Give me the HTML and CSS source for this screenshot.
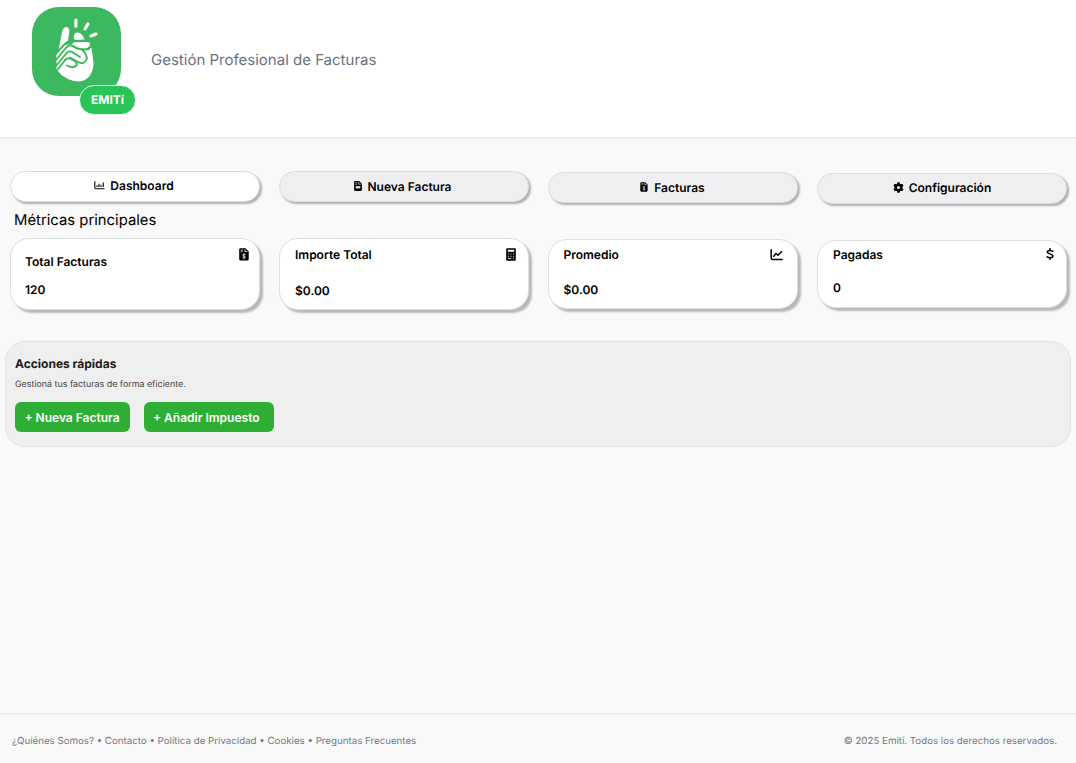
FILE: index.html
```html
<!DOCTYPE html>
<html lang="es">
<head>
<meta charset="utf-8">
<title>Emití</title>
<link rel="stylesheet" href="styles.css">
</head>
<body>
<svg class="defs" width="0" height="0">
  <symbol id="invoice" viewBox="0 0 10 13">
    <path fill="currentColor" d="M1.600.3h4.900l3.200 3v7.900c0 .8-.6 1.400-1.400 1.400H1.600c-.8 0-1.400-.6-1.400-1.400V1.700C.2.900.8.3 1.600.3z"/>
    <path stroke="#fff" stroke-width=".8" fill="none" d="M1.700 2.200h2.300M1.700 3.800h1.600M6 1.300v2.300h2.500M6.500 6.600C5.800 6 3.700 6 3.800 7.200c.1 1.100 2.600.8 2.600 2 0 1.200-2.100 1.100-2.900.5M5 5.400v5.800"/>
  </symbol>
  <symbol id="doc" viewBox="0 0 8 10">
    <path fill="currentColor" d="M1.200.1h4l2.700 2.600v6.100c0 .7-.5 1.100-1.100 1.100H1.200C.5 9.900.1 9.500.1 8.800V1.200C.1.500.5.100 1.200.100z"/>
    <path fill="none" stroke="#efeff1" stroke-width=".7" d="M1.300 1.800h1.800M1.300 3.300h1.800M4.700 1v2.200h2.200"/>
    <path fill="#efeff1" d="M1.700 5.200h4.600v2.200H1.700z"/>
  </symbol>
</svg>

<header class="header">
  <div class="logo">
    <svg class="logo-mark" viewBox="0 0 90 90">
      <g fill="#fff">
        <path d="M27 47 31 26C32.500 19 38.800 19.500 38.300 26L37 35 33 41z"/>
        <path d="M43 32.500C41.500 26 48 24.500 51.500 29.500L53.500 33.500 44 34z"/>
        <path d="M40.500 38.500 43 36.200 56 36C60.500 36.200 60 40.500 55 42.500 51 43.500 46 41.500 43 39.500z"/>
        <path d="M25.500 50 36 39C38 37.500 40 38.500 43 40.500 47 43.500 52 44 56 43.500L60.500 42 62.500 56C63 67 56.500 75.500 48 75.500 41 75.500 35 72 30.500 69L25.500 63.500z"/>
        <path d="M25.500 48.500 33 38 36 39 37 42 25.500 56z"/>
      </g>
      <g fill="none" stroke="#3cb85f" stroke-width="1.900" stroke-linecap="round" stroke-linejoin="round">
        <path d="M24.500 48 34 38C36.500 35.500 38 35 42 35L58 35"/>
        <path d="M24.500 54.500 34 43C37 39 39 38.500 42.500 40.500 48 44.500 53 44 58 43"/>
        <path d="M24.500 60.500 34 49C37 44.500 39 44.500 42 46.500L49 51M51.500 44.500C54.500 46 55.500 50 56 52.500 54 57.500 51 58 47 56L39 51.500"/>
        <path d="M24.500 66 33 55.500C35.500 51.500 37.500 51.500 40 53 44 55 47 57 45.500 59.500 43 62 39.500 61.500 36 59.500"/>
      </g>
      <path fill="none" stroke="#fff" stroke-width="3.100" stroke-linecap="round" d="M44.900 14v6.200M57 17.800 54 23M65 28 60 30"/>
    </svg>
    <span class="logo-badge">EMITí</span>
  </div>
  <p class="tagline">Gestión Profesional de Facturas</p>
</header>

<main class="main">
  <nav class="grid tabs">
    <a class="tab active"><svg class="tab-icon chart" viewBox="0 0 11 9"><path d="M.8.3v6.200q0 1.200 1.200 1.200h8.500M3 6V4.200M5 6V2.700M7 6V3.700M9.300 6V1.500" fill="none" stroke="currentColor" stroke-width="1.100"/></svg><span>Dashboard</span></a>
    <a class="tab second"><svg class="tab-icon file"><use href="#doc"/></svg><span>Nueva Factura</span></a>
    <a class="tab third"><svg class="tab-icon file"><use href="#invoice"/></svg><span>Facturas</span></a>
    <a class="tab fourth"><svg class="tab-icon gear" viewBox="0 0 12 12"><path fill="currentColor" fill-rule="evenodd" d="M4.800.3h2.400l.4 1.700.9.500 1.700-.5 1.200 2.100-1.200 1.300v1.200l1.200 1.300-1.200 2.100-1.700-.5-.9.500-.4 1.700H4.800l-.4-1.700-.9-.5-1.700.5L.6 7.900l1.200-1.300V5.400L.6 4.100 1.800 2l1.700.5.900-.5zM6 4.300a1.700 1.700 0 1 0 0 3.400 1.700 1.700 0 0 0 0-3.400z"/></svg><span>Configuración</span></a>
  </nav>

  <h2 class="section-title">Métricas principales</h2>

  <section class="grid metrics">
    <article class="card total">
      <div><h3>Total Facturas</h3><p>120</p></div>
      <svg class="card-icon invoice"><use href="#invoice"/></svg>
    </article>
    <article class="card amount">
      <div><h3>Importe Total</h3><p>$0.00</p></div>
      <svg class="card-icon calc" viewBox="0 0 10 13"><path fill="currentColor" fill-rule="evenodd" d="M1.300.2h7.400q1.100 0 1.100 1.100v10.200q0 1.200-1.100 1.200H1.300Q.2 12.700.2 11.500V1.300Q.2.2 1.300.2zM1.800 1.800v2h6.400v-2z"/><path stroke="#fff" stroke-width=".9" stroke-dasharray="1 1.500" d="M2 6h6.500M2 8.300h6.500"/><path stroke="#fff" stroke-width=".8" d="M2 10.600h3.500M7 10.600h1"/></svg>
    </article>
    <article class="card average">
      <div><h3>Promedio</h3><p>$0.00</p></div>
      <svg class="card-icon line" viewBox="0 0 13 12"><path d="M1.200.8v8.400q0 1.400 1.400 1.400h9.600M3.700 7.200 6 4.500l2 1.800 3.500-3.600" fill="none" stroke="currentColor" stroke-width="1.500" stroke-linecap="round" stroke-linejoin="round"/></svg>
    </article>
    <article class="card paid">
      <div><h3>Pagadas</h3><p>0</p></div>
      <svg class="card-icon dollar" viewBox="0 0 8 12"><path d="M4 .6v1.700M4 9.600v1.800M6.900 3.300C5.300 2.300 1.300 1.900 1.300 4.100 1.300 6.300 6.900 5.400 6.900 7.900 6.900 10.200 2.800 9.900 1.100 8.800" fill="none" stroke="currentColor" stroke-width="1.500" stroke-linecap="round"/></svg>
    </article>
  </section>

  <section class="actions">
    <h2>Acciones rápidas</h2>
    <p>Gestioná tus facturas de forma eficiente.</p>
    <div class="buttons">
      <button class="button new">+ Nueva Factura</button>
      <button class="button tax">+ Añadir Impuesto</button>
    </div>
  </section>
</main>

<footer class="footer">
  <span class="links">¿Quiénes Somos? • Contacto • Política de Privacidad • Cookies • Preguntas Frecuentes</span>
  <span class="copyright">© 2025 Emití. Todos los derechos reservados.</span>
</footer>
</body>
</html>
```
FILE: styles.css
```css
* { box-sizing: border-box; }
body {
  margin: 0;
  height: 763px;
  display: flex;
  flex-direction: column;
  overflow: hidden;
  background: #f9f9f9;
  color: #000;
  font-family: Inter, sans-serif;
  text-rendering: geometricPrecision;
}
h2, h3, p { margin: 0; }
.defs { position: absolute; }
.header {
  height: 139px;
  flex: none;
  display: flex;
  align-items: flex-start;
  padding: 6px 0 0 31px;
  background: #fff;
  border-bottom: 2px solid #ededee;
}
.logo {
  position: relative;
  width: 91px;
  height: 91px;
  border: .5px solid #fff;
  background: #3cb85f;
  border-radius: 28px;
}
.logo-mark { display: block; width: 90px; height: 90px; margin: -1px 0 0 -1px; }
.logo-badge {
  position: absolute;
  left: 47px;
  top: 78px;
  width: 57px;
  height: 30px;
  border-radius: 15px;
  border: 1px solid #e7f8ec;
  background: #29c558;
  color: #fff;
  font-size: 12px;
  font-weight: 700;
  line-height: 28px;
  text-align: center;
}
.tagline {
  margin: 44px 0 0 29px;
  color: #6b7280;
  font-size: 15px;
  line-height: 20px;
}
.main { flex: 1; padding: 32px 5px 0; }
.grid {
  display: grid;
  grid-template-columns: repeat(4, 250px);
  column-gap: 19px;
  padding-left: 5px;
  align-items: start;
}
.tab {
  display: flex;
  align-items: center;
  justify-content: center;
  height: 31px;
  border: 1px solid #dedee0;
  border-radius: 16px;
  background: #efeff1;
  box-shadow: 2px 2px 2px rgba(0, 0, 0, .29);
  font-size: 12px;
  font-weight: 600;
  padding: 0 2px 1px 0;
}
.tabs { height: 39px; }
.tab.active { background: #fff; padding-bottom: 2px; }
.third { margin-top: 1px; padding-right: 1px; }
.fourth { margin-top: 2px; padding: 0 0 3px; }
.tab-icon { margin-right: 5px; flex: none; }
.chart { width: 11px; height: 9px; }
.file { width: 8px; height: 10px; }
.third .tab-icon { margin-right: 6px; }
.gear { width: 11px; height: 11px; }
.section-title {
  height: 28px;
  padding-left: 9px;
  font-size: 14.850px;
  font-weight: 400;
  line-height: 20px;
}
.card {
  display: flex;
  justify-content: space-between;
  height: 72px;
  border: 1px solid #dfdfdf;
  border-radius: 19px;
  background: #fff;
  box-shadow: 3px 3px 2px rgba(0, 0, 0, .26);
  padding: 8px 14px 0;
}
.card h3, .card p { font-size: 12px; font-weight: 600; line-height: 16px; }
.total { padding-right: 10px; }
.total h3 { margin-top: 7px; }
.total p { margin-top: 12px; }
.amount { padding: 8px 12px 0 15px; }
.amount p { margin-top: 20px; }
.average { margin-top: 1px; height: 70px; padding: 7px 14px 0 14.500px; }
.average p { margin-top: 19px; }
.paid { margin-top: 2px; height: 68px; padding: 6px 12px 0 15px; }
.paid p { margin-top: 17px; }
.card-icon { flex: none; }
.invoice { width: 10px; height: 13px; margin-top: 1px; }
.calc { width: 10px; height: 13px; margin-top: 1px; }
.line { width: 13px; height: 12px; margin-top: 2px; }
.dollar { width: 8px; height: 12px; margin-top: 1px; }
.actions {
  margin-top: 31px;
  height: 106px;
  border: 1px solid #e3e3e3;
  border-radius: 20px;
  background: #efefef;
  padding: 13px 9px;
  color: #1d1d1d;
}
.actions h2 { font-size: 12px; font-weight: 700; line-height: 18px; }
.actions p { margin-top: 5px; color: #444; font-size: 8.900px; line-height: 14px; }
.buttons { display: flex; gap: 14px; margin-top: 10px; }
.button {
  height: 30px;
  border: 0;
  border-radius: 6px;
  background: #2eae34;
  color: #fff;
  font: 600 12px/30px Inter, sans-serif;
  padding: 1px 0 0 9.500px;
  text-align: left;
}
.new { width: 115px; }
.tax { width: 130px; padding-left: 9px; }
.footer {
  height: 50px;
  flex: none;
  display: flex;
  justify-content: space-between;
  border-top: 2px solid #eeeeee;
  padding: 19px 19px 0 12px;
  color: #747982;
  font-size: 9.730px;
  line-height: 16px;
}
```
